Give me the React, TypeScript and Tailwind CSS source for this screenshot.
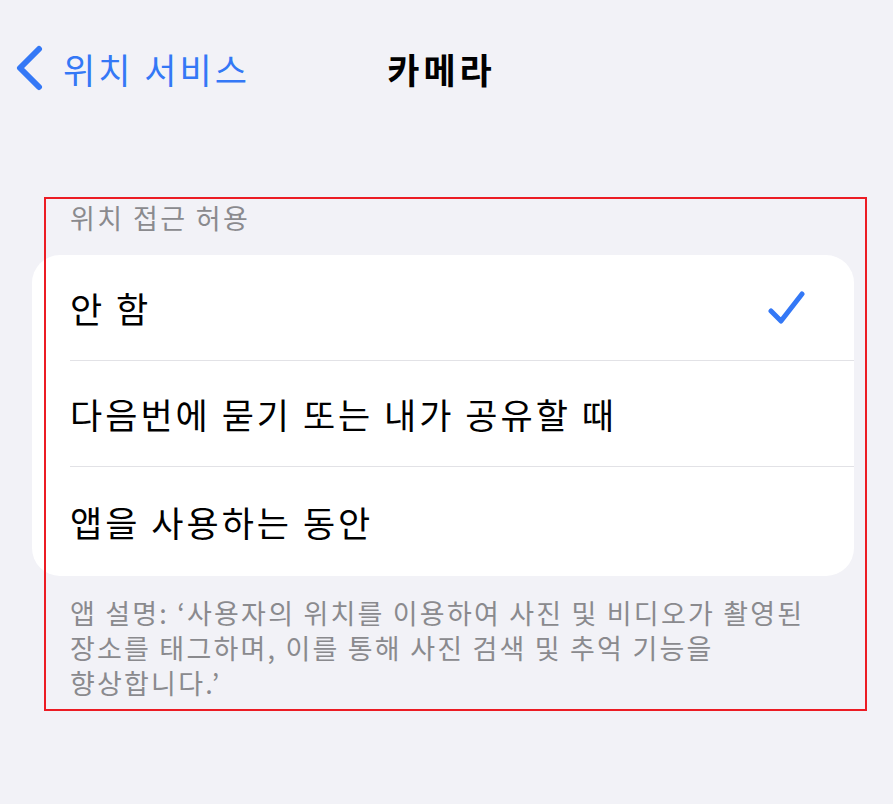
const options = ["안 함", "다음번에 묻기 또는 내가 공유할 때", "앱을 사용하는 동안"];

const footer = [
  "앱 설명: ‘사용자의 위치를 이용하여 사진 및 비디오가 촬영된",
  "장소를 태그하며, 이를 통해 사진 검색 및 추억 기능을",
  "향상합니다.’",
];

export default function App() {
  const selected = 0;

  return (
    <div
      className="relative min-h-screen w-[893px] bg-[#f2f2f7]"
      style={{ fontFamily: '"Noto Sans CJK KR", "Noto Sans", sans-serif' }}
    >
      {/* nav bar */}
      <div className="grid h-[136px] grid-cols-[1fr_auto_1fr] items-center pr-[10px]">
        <button className="flex items-center gap-[20px] pl-[15px] text-[#3478f6]">
          <svg width="28" height="46" viewBox="0 0 28 46" fill="none">
            <path
              d="M24 4 L5 23 L24 42"
              stroke="currentColor"
              strokeWidth="6"
              strokeLinecap="round"
              strokeLinejoin="round"
            />
          </svg>
          <span className="text-[35px] leading-none tracking-[3px]">위치 서비스</span>
        </button>
        <h1 className="text-[35px] font-bold leading-none tracking-[4px] text-black">카메라</h1>
        <div />
      </div>

      <div className="mt-[64px] pl-[70px] text-[27px] leading-[35px] tracking-[2.4px] text-[#8a8a8e]">
        위치 접근 허용
      </div>

      <div className="ml-[32px] mt-[20px] w-[822px] overflow-hidden rounded-[28px] bg-white">
        {options.map((label, i) => (
          <div key={label} className="pl-[38px]">
            <div
              className={`flex items-center justify-between pr-[48px] ${
                i < options.length - 1 ? "h-[106px] border-b border-[#e2e2e6]" : "h-[109px]"
              }`}
            >
              <span className="text-[35px] leading-none tracking-[3px] text-black">{label}</span>
              {i === selected && (
                <svg width="38" height="36" viewBox="0 0 38 36" fill="none">
                  <path
                    d="M3 21 L13 31 L34 4"
                    stroke="#3478f6"
                    strokeWidth="5"
                    strokeLinecap="round"
                    strokeLinejoin="round"
                  />
                </svg>
              )}
            </div>
          </div>
        ))}
      </div>

      <div className="mt-[19px] flex flex-col pl-[70px] text-[27px] leading-[35px] tracking-[2.2px] text-[#8a8a8e]">
        {footer.map((line) => (
          <span key={line} className="whitespace-nowrap">
            {line}
          </span>
        ))}
      </div>

      {/* annotation box */}
      <div className="pointer-events-none absolute left-[44px] top-[197px] h-[514px] w-[823px] border-2 border-[#ec1c24]" />
    </div>
  );
}
